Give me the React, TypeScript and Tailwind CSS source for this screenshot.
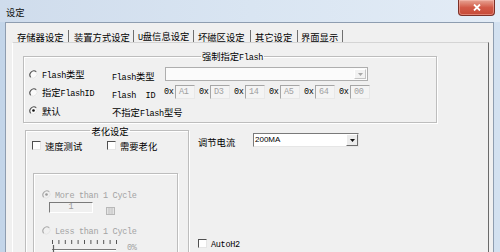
import React from "react";

const CJK = "font-['Noto_Sans_CJK_SC',sans-serif] text-[9.3px]";
const MONO = "font-['Liberation_Mono',monospace] text-[8.5px] tracking-[-0.3px]";

function Mix({ s, className = "" }: { s: string; className?: string }) {
  const parts = s.split(/([\x20-\x7e]+)/).filter((p) => p.length > 0);
  return (
    <span className={"whitespace-pre leading-[12px] " + className}>
      {parts.map((p, i) =>
        /^[\x20-\x7e]+$/.test(p) ? (
          <span key={i} className={MONO}>
            {p}
          </span>
        ) : (
          <span key={i} className={CJK}>
            {p}
          </span>
        )
      )}
    </span>
  );
}

function Radio({ checked = false, disabled = false }: { checked?: boolean; disabled?: boolean }) {
  const c = disabled ? "#a8a8a8" : "#4a4a4a";
  return (
    <svg width="9" height="9" viewBox="0 0 9 9" className="shrink-0">
      <circle cx="4.5" cy="4.5" r="4" fill={disabled ? "#f0f0f0" : "#fafafa"} />
      <path d="M1.7 7.3 A4 4 0 0 1 7.3 1.7" stroke={c} strokeWidth="1.1" fill="none" />
      <path d="M7.3 1.7 A4 4 0 0 1 1.7 7.3" stroke="#e4e4e4" strokeWidth="1" fill="none" />
      {checked && <circle cx="4.5" cy="4.5" r="1.3" fill={disabled ? "#9a9a9a" : "#111"} />}
    </svg>
  );
}

function Check() {
  return (
    <span className="block w-[9px] h-[9px] shrink-0 bg-white border border-t-[#505050] border-l-[#505050] border-b-[#e6e6e6] border-r-[#e6e6e6]" />
  );
}

function IdBox({ v }: { v: string }) {
  return (
    <span className="flex items-center w-[20px] h-[14px] pl-[3px] bg-[#f4f4f4] border border-t-[#a6a6a6] border-l-[#a6a6a6] border-b-[#e8e8e8] border-r-[#e8e8e8]">
      <span className={MONO + " text-[#a0a0a0] leading-[10px]"}>{v}</span>
    </span>
  );
}

function Arrow({ color }: { color: string }) {
  return (
    <svg width="5" height="3" viewBox="0 0 5 3">
      <path d="M0 0 H5 L2.5 3 Z" fill={color} />
    </svg>
  );
}

const ETCH = "border border-[#bdbdbd] shadow-[inset_1px_1px_0_#ffffff,1px_1px_0_#ffffff]";

export default function App() {
  const ids = ["A1", "D3", "14", "A5", "64", "00"];
  const tabs: { t: string; w: string; pl: string }[] = [
    { t: "存储器设定", w: "w-[57px]", pl: "pl-[5px]" },
    { t: "装置方式设定", w: "w-[65px]", pl: "pl-[5px]" },
    { t: "U盘信息设定", w: "w-[60px]", pl: "pl-[4px]" },
    { t: "坏磁区设定", w: "w-[57px]", pl: "pl-[4px]" },
    { t: "其它设定", w: "w-[47px]", pl: "pl-[4px]" },
    { t: "界面显示", w: "w-[45px]", pl: "pl-[3px]" },
  ];
  return (
    <div className="w-[500px] h-[252px] overflow-hidden flex flex-col bg-gradient-to-r from-[#c3d5e9] to-[#d3e1f0] text-black">
      {/* title bar */}
      <div className="h-[22px] shrink-0 flex justify-between items-start bg-gradient-to-r from-[#cfdcec] via-[#d9e5f2] to-[#e3ecf6]">
        <span className={CJK + " leading-[12px] mt-[6px] ml-[6px] text-[#111]"}>设定</span>
        <div className="mr-[5px] w-[37px] h-[16px] flex items-center justify-center rounded-b-[4px] border border-t-0 border-[#7c3027] bg-gradient-to-b from-[#e6a394] via-[#d25a48] to-[#c64a37] shadow-[inset_0_0_0_1px_rgba(255,200,190,0.45)]">
          <svg width="8" height="7" viewBox="0 0 8 7">
            <path d="M1 0.5 L7 6.5 M7 0.5 L1 6.5" stroke="#ffffff" strokeWidth="1.8" />
          </svg>
        </div>
      </div>
      {/* body */}
      <div className="flex-1 flex overflow-hidden">
        <div className="ml-[5px] mr-[6px] flex-1 flex flex-col overflow-hidden bg-[#f0f0f0] border-t border-l border-r border-[#8e9db0]">
          {/* tabs */}
          <div className="h-[19px] shrink-0 flex items-end pl-[6px]">
            {tabs.map((tb) => (
              <div key={tb.t} className={"h-[12px] flex items-center border-r border-[#6f6f6f] " + tb.w + " " + tb.pl}>
                <Mix s={tb.t} />
              </div>
            ))}
          </div>
          {/* panel */}
          <div className="ml-[6px] w-[477px] flex-1 flex flex-col border-t border-t-[#d4d4d4] border-l border-l-white border-r border-r-[#6a6a6a]">
            {/* group 1 */}
            <fieldset className={"mt-[7px] ml-[10px] w-[414px] pl-[5px] pb-[5px] " + ETCH}>
              <legend className="mx-auto px-[1px] h-[12px] flex items-center">
                <Mix s="强制指定Flash" />
              </legend>
              <div className="mt-[5px] h-[14px] flex items-center">
                <div className="w-[83px] flex items-center gap-[4px]">
                  <Radio />
                  <Mix s="Flash类型" />
                </div>
                <div className="w-[53px]">
                  <Mix s="Flash类型" />
                </div>
                <div className="w-[203px] h-[14px] flex items-stretch bg-[#fbfbfb] border border-[#aeaeae]">
                  <div className="flex-1" />
                  <div className="w-[12px] my-[1px] mr-[1px] flex items-center justify-center bg-[#f2f2f2] border border-t-white border-l-white border-b-[#c4c4c4] border-r-[#c4c4c4]">
                    <Arrow color="#a8a8a8" />
                  </div>
                </div>
              </div>
              <div className="mt-[4px] h-[14px] flex items-center">
                <div className="w-[83px] flex items-center gap-[4px]">
                  <Radio />
                  <Mix s="指定FlashID" />
                </div>
                <div className="w-[52px]">
                  <Mix s="Flash  ID" />
                </div>
                <div className="flex items-center gap-[4px]">
                  {ids.map((v) => (
                    <div key={v} className="flex items-center">
                      <span className={MONO + " w-[11px] leading-[10px]"}>0x</span>
                      <IdBox v={v} />
                    </div>
                  ))}
                </div>
              </div>
              <div className="mt-[4px] h-[14px] flex items-center">
                <div className="w-[83px] flex items-center gap-[4px]">
                  <Radio checked />
                  <Mix s="默认" />
                </div>
                <div>
                  <Mix s="不指定Flash型号" />
                </div>
              </div>
            </fieldset>
            {/* lower area */}
            <div className="mt-[1px] ml-[12px] flex">
              <fieldset className={"w-[164px] h-[150px] pl-[6px] shrink-0 " + ETCH}>
                <legend className="mx-auto px-[1px] h-[12px] flex items-center">
                  <Mix s="老化设定" />
                </legend>
                <div className="mt-[4px] h-[10px] flex items-center">
                  <div className="w-[75px] flex items-center gap-[4px]">
                    <Check />
                    <Mix s="速度测试" />
                  </div>
                  <div className="flex items-center gap-[4px]">
                    <Check />
                    <Mix s="需要老化" />
                  </div>
                </div>
                <div className={"mt-[23px] ml-[1px] w-[145px] h-[100px] pt-[15px] pl-[8px] " + ETCH}>
                  <div className="h-[10px] flex items-center gap-[4px]">
                    <Radio checked disabled />
                    <Mix s="More than 1 Cycle" className="text-[#a3a3a3]" />
                  </div>
                  <div className="mt-[3px] flex items-start">
                    <div className="ml-[7px] w-[44px] h-[11px] flex items-center justify-center bg-[#f0f0f0] border border-t-[#7a7a7a] border-l-[#7a7a7a] border-b-white border-r-white">
                      <span className={MONO + " text-[#9a9a9a] leading-[9px]"}>1</span>
                    </div>
                    <svg width="9" height="8" viewBox="0 0 9 8" className="ml-[13px] mt-[5px]">
                      <rect x="0.5" y="0.5" width="8" height="7" fill="#e4e4e4" stroke="#b8b8b8" />
                      <path d="M2 2 H7 M2 4 H7 M2 6 H7 M3 1 V7 M6 1 V7" stroke="#c8c8c8" strokeWidth="0.8" />
                    </svg>
                  </div>
                  <div className="mt-[10px] h-[10px] flex items-center gap-[4px]">
                    <Radio disabled />
                    <Mix s="Less than 1 Cycle" className="text-[#a3a3a3]" />
                  </div>
                  <div className="mt-[3px] flex items-start">
                    <svg width="70" height="16" viewBox="0 0 70 16" className="ml-[8px]">
                      {Array.from({ length: 11 }).map((_, i) => (
                        <line key={i} x1={2.5 + i * 6.4} y1="2" x2={2.5 + i * 6.4} y2="6" stroke="#555" strokeWidth="1" />
                      ))}
                      <line x1="2" y1="11.5" x2="66" y2="11.5" stroke="#7a7a7a" strokeWidth="1" />
                      <line x1="3" y1="12.5" x2="66" y2="12.5" stroke="#ffffff" strokeWidth="1" />
                      <line x1="3.5" y1="7" x2="3.5" y2="16" stroke="#606060" strokeWidth="1.2" />
                    </svg>
                    <span className={MONO + " text-[#a3a3a3] ml-[7px] mt-[5px] leading-[10px]"}>0%</span>
                  </div>
                </div>
              </fieldset>
              <div className="ml-[9px] pt-[9px] flex flex-col">
                <div className="h-[14px] flex items-center">
                  <div className="w-[55px]">
                    <Mix s="调节电流" />
                  </div>
                  <div className="w-[106px] h-[14px] flex items-stretch bg-white border border-t-[#7a7a7a] border-l-[#7a7a7a] border-b-[#e6e6e6] border-r-[#e6e6e6]">
                    <span className="flex-1 pl-[1px] flex items-center font-['Liberation_Sans',sans-serif] text-[8px] leading-[10px]">200MA</span>
                    <div className="w-[12px] flex items-center justify-center bg-[#ececec] border border-t-white border-l-white border-b-[#6e6e6e] border-r-[#6e6e6e]">
                      <Arrow color="#111" />
                    </div>
                  </div>
                </div>
                <div className="mt-[91px] h-[10px] flex items-center gap-[4px]">
                  <Check />
                  <Mix s="AutoH2" />
                </div>
              </div>
            </div>
          </div>
        </div>
      </div>
    </div>
  );
}
